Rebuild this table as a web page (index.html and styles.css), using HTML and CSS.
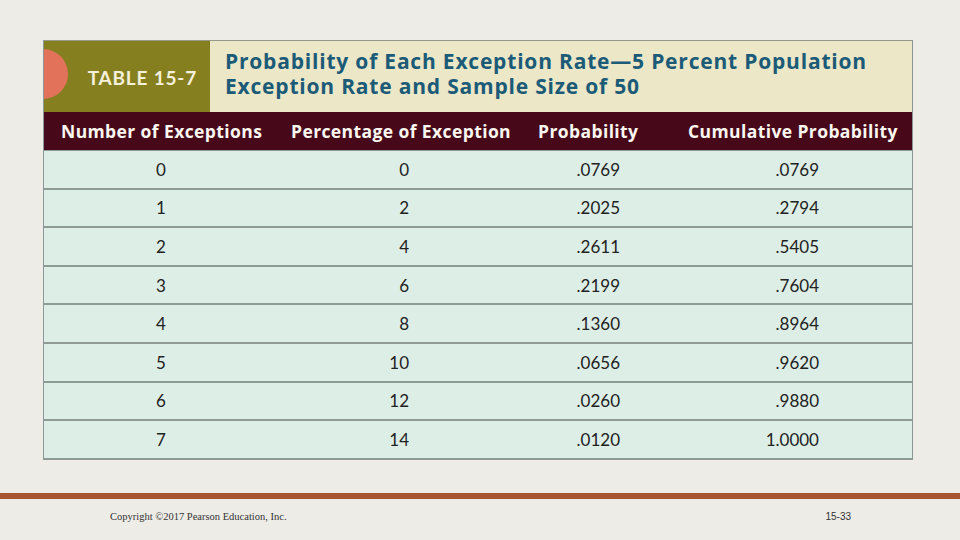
FILE: index.html
```html
<!DOCTYPE html>
<html>
<head>
<meta charset="utf-8">
<link rel="stylesheet" href="styles.css">
</head>
<body>
<div class="slide">
  <div class="table">
    <div class="title">
      <div class="tag"><span class="dot"></span><span class="tag-text">TABLE 15-7</span></div>
      <div class="caption">Probability of Each Exception Rate—5 Percent Population<br>Exception Rate and Sample Size of 50</div>
    </div>
    <div class="row head">
      <div class="c1">Number of Exceptions</div>
      <div class="c2">Percentage of Exception</div>
      <div class="c3">Probability</div>
      <div class="c4">Cumulative Probability</div>
    </div>
    <div class="row"><div class="c1">0</div><div class="c2">0</div><div class="c3">.0769</div><div class="c4">.0769</div></div>
    <div class="row"><div class="c1">1</div><div class="c2">2</div><div class="c3">.2025</div><div class="c4">.2794</div></div>
    <div class="row"><div class="c1">2</div><div class="c2">4</div><div class="c3">.2611</div><div class="c4">.5405</div></div>
    <div class="row"><div class="c1">3</div><div class="c2">6</div><div class="c3">.2199</div><div class="c4">.7604</div></div>
    <div class="row"><div class="c1">4</div><div class="c2">8</div><div class="c3">.1360</div><div class="c4">.8964</div></div>
    <div class="row"><div class="c1">5</div><div class="c2">10</div><div class="c3">.0656</div><div class="c4">.9620</div></div>
    <div class="row"><div class="c1">6</div><div class="c2">12</div><div class="c3">.0260</div><div class="c4">.9880</div></div>
    <div class="row"><div class="c1">7</div><div class="c2">14</div><div class="c3">.0120</div><div class="c4">1.0000</div></div>
  </div>
  <div class="rule"></div>
  <div class="footer">
    <span class="copy">Copyright ©2017 Pearson Education, Inc.</span>
    <span class="page">15-33</span>
  </div>
</div>
</body>
</html>
```
FILE: styles.css
```css
html, body {
  margin: 0;
  padding: 0;
}
body {
  width: 960px;
  height: 540px;
  overflow: hidden;
  background: #eeece7;
  font-family: Lato, "Open Sans", sans-serif;
}
.slide {
  padding-top: 40px;
}
.table {
  width: 870px;
  margin-left: 43px;
  border-left: 1.5px solid #8d9894;
  border-right: 1.5px solid #8d9894;
  box-sizing: border-box;
}
.title {
  display: grid;
  grid-template-columns: 166px 1fr;
  height: 72px;
  border-top: 1px solid #9a9a8a;
  box-sizing: border-box;
}
.tag {
  position: relative;
  background: #857f20;
  display: flex;
  align-items: center;
  justify-content: flex-end;
  padding-right: 13px;
  overflow: hidden;
}
.dot {
  position: absolute;
  left: -26px;
  top: 8px;
  width: 50px;
  height: 50px;
  border-radius: 50%;
  background: #e2735a;
}
.tag-text {
  color: #f4f0da;
  font-weight: 700;
  font-size: 19px;
  letter-spacing: 0.8px;
  margin-top: 1px;
}
.caption {
  background: #ebe7c7;
  color: #1b5b78;
  font-family: "Open Sans", sans-serif;
  font-weight: 700;
  font-size: 21px;
  line-height: 25px;
  letter-spacing: 0.8px;
  padding-left: 15px;
  padding-top: 8px;
}
.row {
  display: grid;
  grid-template-columns: 234px 248px 143px 1fr;
  height: 38.6px;
  box-sizing: border-box;
  border-bottom: 2px solid #8e9a95;
  background: #ddeee6;
  align-items: center;
  color: #222;
  font-size: 17px;
}
.row.head {
  background: #47091a;
  color: #fbf7f0;
  font-family: "Open Sans", sans-serif;
  font-weight: 700;
  font-size: 17.5px;
  letter-spacing: 0.4px;
  height: 39px;
  border-bottom: 1px solid #8e9a95;
}
.row .c1 { text-align: center; }
.row .c2 { text-align: right; padding-right: 117px; }
.row .c3 { text-align: right; padding-right: 49px; }
.row .c4 { text-align: right; padding-right: 93px; }
.row.head .c1 { text-align: left; padding-left: 17px; }
.row.head .c2 { text-align: left; padding-left: 13px; padding-right: 0; }
.row.head .c3 { text-align: left; padding-left: 12px; padding-right: 0; }
.row.head .c4 { text-align: left; padding-left: 19px; padding-right: 0; }
.rule {
  margin-top: 33px;
  height: 6px;
  background: #a8552f;
}
.footer {
  display: flex;
  align-items: center;
  height: 36px;
  position: relative;
}
.copy {
  margin-left: 110px;
  font-family: "Liberation Serif", serif;
  font-size: 10.5px;
  color: #333;
}
.page {
  margin-left: auto;
  margin-right: 109px;
  font-family: "Liberation Sans", sans-serif;
  font-size: 10px;
  color: #333;
}
```
